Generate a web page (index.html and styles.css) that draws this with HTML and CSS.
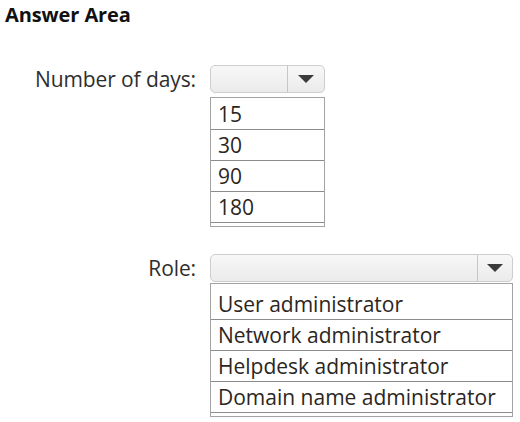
FILE: index.html
```html
<!DOCTYPE html>
<html>
<head>
<meta charset="utf-8">
<link rel="stylesheet" href="styles.css">
</head>
<body>
<h1 class="title">Answer Area</h1>
<div class="form">
  <div class="label">Number of days:</div>
  <div class="field">
    <div class="select select-days">
      <span class="select-value"></span>
      <span class="select-btn"><svg width="16" height="8" viewBox="0 0 16 8"><path d="M0 0H16L8 8Z" fill="#3a3a3a"/></svg></span>
    </div>
    <ul class="options options-days">
      <li>15</li>
      <li>30</li>
      <li>90</li>
      <li>180</li>
    </ul>
  </div>

  <div class="label">Role:</div>
  <div class="field">
    <div class="select select-role">
      <span class="select-value"></span>
      <span class="select-btn"><svg width="16" height="8" viewBox="0 0 16 8"><path d="M0 0H16L8 8Z" fill="#3a3a3a"/></svg></span>
    </div>
    <ul class="options options-role">
      <li>User administrator</li>
      <li>Network administrator</li>
      <li>Helpdesk administrator</li>
      <li>Domain name administrator</li>
    </ul>
  </div>
</div>
</body>
</html>
```

FILE: styles.css
```css
html, body {
  margin: 0;
  background: #ffffff;
}

body {
  font-family: "Open Sans", "Noto Sans", sans-serif;
  color: #222222;
  width: 520px;
  height: 422px;
  overflow: hidden;
}

.title {
  margin: 0;
  padding: 2px 0 0 5px;
  font-size: 20px;
  font-weight: 700;
  line-height: 26px;
  color: #111111;
  letter-spacing: -0.1px;
}

.form {
  display: grid;
  grid-template-columns: 196px auto;
  column-gap: 14px;
  row-gap: 27px;
  margin-top: 37px;
}

.label {
  text-align: right;
  font-size: 21px;
  line-height: 28px;
  color: #2e2e2e;
  letter-spacing: -0.1px;
}

.field {
  display: flex;
  flex-direction: column;
  align-items: flex-start;
}

.select {
  display: flex;
  height: 28px;
  border: 1px solid #cdcdcd;
  border-radius: 5px;
  background: linear-gradient(#f7f7f7, #ebebeb);
  box-sizing: border-box;
}

.select-days { width: 115px; }
.select-role { width: 303px; }

.select-value {
  flex: 1;
  border-right: 1px solid #c6c6c6;
}

.select-btn {
  display: flex;
  align-items: center;
  justify-content: center;
}

.select-days .select-btn { width: 36px; }
.select-role .select-btn { width: 34px; }

.options {
  list-style: none;
  margin: 0;
  padding: 0 0 3px 0;
  border: 1px solid #a3a3a3;
  background: #ffffff;
  box-sizing: border-box;
}

.options li {
  height: 31px;
  box-sizing: border-box;
  padding-left: 7px;
  border-bottom: 1px solid #8c8c8c;
  font-size: 21px;
  line-height: 30px;
  color: #2b2621;
}

.options-days {
  width: 115px;
  margin-top: 4px;
  padding-top: 1px;
}

.options-role {
  width: 303px;
  margin-top: 1px;
  padding-top: 5px;
}
```
